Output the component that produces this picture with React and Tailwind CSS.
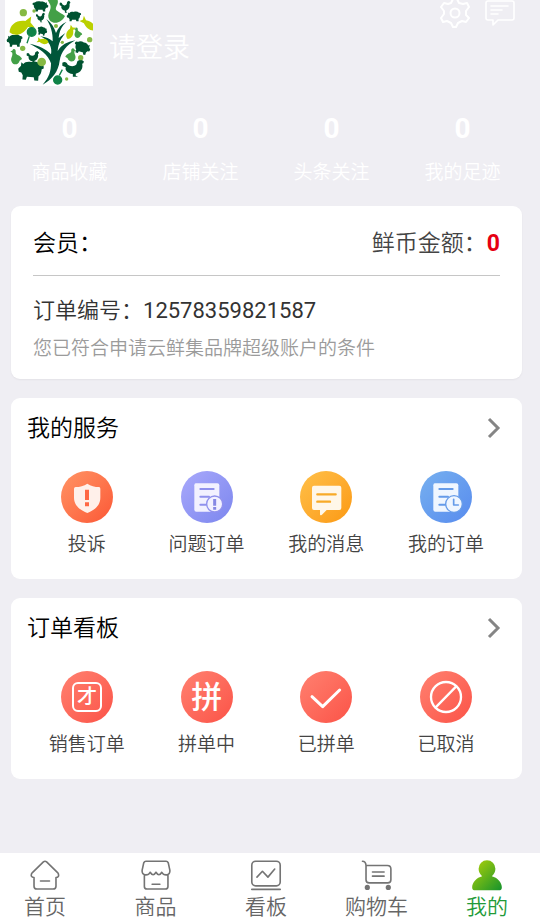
import React from 'react';

function TreeLogo() {
  return (
    <svg viewBox="15 0 264 258" className="h-[86px] w-[88px] shrink-0 bg-white" role="img" aria-label="云鲜集">
      <defs>
        <g id="pig">
          <path d="M0 12C-2 6 3 3 8 4C14 -1 22 -2 30 1C38 0 45 2 48 6L53 3L53 10L59 16L57 22L51 23L47 28V36H39L37 30H21L19 36H10L10 27C5 24 4 18 4 13Z" />
        </g>
        <g id="hen">
          <path d="M0 8C4 4 8 7 9 12C14 17 20 17 24 12L26 4L32 0L37 5L36 9L34 10C36 20 32 30 23 33L23 38L27 40L18 40L18 34C8 32 4 24 6 18L0 15Z" />
        </g>
        <g id="fish">
          <path d="M0 24C5 7 25 -2 48 5L66 -3L61 11L70 25L52 20C35 36 12 38 0 24Z" />
        </g>
        <g id="duck">
          <path d="M0 10L7 7C10 1 19 3 18 11C16 20 35 18 39 29L31 33C28 44 9 46 4 35C-1 25 10 21 6 12Z" />
        </g>
      </defs>
      <path fill="#00563a" d="M128 254C148 232 153 212 153 190C145 163 118 146 89 131C116 137 139 147 153 163C157 145 149 122 121 109C138 112 149 116 158 124C159 97 151 75 139 57C154 68 163 82 168 99C174 83 184 72 200 65C184 79 178 94 176 114L196 99C184 115 175 128 173 153C185 134 201 126 226 121C199 137 184 154 179 182C175 215 157 237 128 254Z" />
      <g fill="#005331">
        <use href="#pig" transform="translate(98 4) scale(.8 .85)" />
        <use href="#pig" transform="translate(243 35) scale(-.73 .8)" />
        <use href="#pig" transform="translate(67 104) scale(-.8 1)" />
        <use href="#pig" transform="translate(228 120) rotate(16) scale(.83 1)" />
        <use href="#pig" transform="translate(132 188) rotate(5) scale(-1.28 1.55)" />
        <use href="#pig" transform="translate(115 78) rotate(12) scale(.5 .7)" />
        <use href="#hen" transform="translate(179 2) scale(.87 .9)" />
        <use href="#hen" transform="translate(108 38) scale(.72)" />
        <use href="#hen" transform="translate(80 153) scale(1 .92)" />
        <use href="#hen" transform="translate(187 178) scale(1.75 1.3)" />
      </g>
      <g fill="#bbd000">
        <use href="#fish" transform="translate(23 67) rotate(-11) scale(1.1 1.25)" />
        <use href="#fish" transform="translate(273 101) rotate(230) scale(.78 .72)" />
        <use href="#fish" transform="translate(190 107) rotate(-53) scale(.6 .67)" />
        <use href="#fish" transform="translate(140 139) rotate(205) scale(.5 .55)" />
      </g>
      <g fill="#43a047">
        <path d="M143 0L173 0C177 14 163 22 169 31C177 38 188 42 195 48C184 70 160 75 148 59C138 41 156 31 151 15Z" />
        <use href="#duck" transform="translate(31 143) scale(.9 1.18)" />
        <use href="#duck" transform="translate(222 80) scale(.63 .8)" />
        <use href="#duck" transform="translate(229 141) scale(-.85 1.02)" />
      </g>
      <g fill="#86b943">
        <circle cx="70" cy="38" r="11" />
        <circle cx="125" cy="186" r="13" />
        <circle cx="68" cy="145" r="8" />
        <circle cx="269" cy="119" r="8" />
        <circle cx="102" cy="33" r="5" />
        <circle cx="168" cy="78" r="6" />
        <circle cx="242" cy="173" r="8" />
        <circle cx="187" cy="127" r="5" />
        <circle cx="200" cy="237" r="5" />
      </g>
      <g fill="#108348" stroke="#108348" strokeWidth="4">
        <circle cx="95" cy="96" r="13" />
        <circle cx="173" cy="240" r="12" />
        <path d="M88 109L81 130M178 226L187 209" />
      </g>
    </svg>
  );
}

function GearIcon() {
  return (
    <svg viewBox="0 0 30 28" className="h-7 w-[30px]" fill="none" stroke="white" strokeWidth="2" strokeLinejoin="round" aria-hidden="true">
      <path d="M11 3L13 -1H17L19 3L23 4L27 3L29 7L26 11V15L29 18L26 22L22 21L18 23L16 27H13L11 23L7 21L3 22L1 18L4 14V11L1 7L4 3L8 4Z" />
      <circle cx="15" cy="13" r="4.5" />
    </svg>
  );
}

function ChatIcon() {
  return (
    <svg viewBox="0 0 30 28" className="h-7 w-[30px]" fill="none" stroke="white" strokeWidth="1.6" strokeLinecap="round" strokeLinejoin="round" aria-hidden="true">
      <path d="M3 1H27Q29 1 29 3V18Q29 20 27 20H13L8 25V20H3Q1 20 1 18V3Q1 1 3 1ZM6 6H23M6 10H17M6 14H13" />
    </svg>
  );
}

function Disc({ tone, children }) {
  return (
    <span className={`flex size-[52px] items-center justify-center rounded-full ${tone}`}>
      {children}
    </span>
  );
}

function Glyph({ children }) {
  return (
    <svg viewBox="0 0 156 156" className="size-full" fill="none" strokeLinecap="round" strokeLinejoin="round" aria-hidden="true">
      {children}
    </svg>
  );
}

const RED = 'bg-linear-to-br from-[#ff8070] to-[#fb5247]';

const services = [
  {
    label: '投诉',
    icon: (
      <Disc tone="bg-linear-to-br from-[#ff9364] to-[#fb5635]">
        <Glyph>
          <path fill="#fff0ea" d="M79 38C89 45 102 48 114 48Q118 48 118 53V80C118 103 101 117 79 126C57 117 39 103 39 80V53Q39 48 44 48C56 48 69 45 79 38Z" />
          <path stroke="#ff6844" strokeWidth="12" strokeLinecap="butt" d="M78 56V87M78 94V106" />
        </Glyph>
      </Disc>
    ),
  },
  {
    label: '问题订单',
    icon: (
      <Disc tone="bg-linear-to-br from-[#a9a9fb] to-[#7c86ee]">
        <Glyph>
          <path fill="#f2f1ff" d="M44 37H109Q115 37 115 43V90L104 122H46Q40 122 40 116V43Q40 37 44 37Z" />
          <path stroke="#9091ed" strokeWidth="6" d="M58 54H98M58 77H84M58 101H76" />
          <circle cx="101" cy="99" r="24" fill="#f2f1ff" stroke="#9091ed" strokeWidth="4" />
          <path stroke="#8688e4" strokeWidth="9" strokeLinecap="butt" d="M101 84V104M101 108V116" />
        </Glyph>
      </Disc>
    ),
  },
  {
    label: '我的消息',
    icon: (
      <Disc tone="bg-linear-to-br from-[#ffc047] to-[#fb990c]">
        <Glyph>
          <path fill="#fff7e9" d="M42 44H118Q124 44 124 50V111Q124 117 118 117H80L66 131Q60 135 60 130V117H42Q36 117 36 111V50Q36 44 42 44Z" />
          <path stroke="#f8aa27" strokeWidth="7" d="M52 70H107M52 92H90" />
        </Glyph>
      </Disc>
    ),
  },
  {
    label: '我的订单',
    icon: (
      <Disc tone="bg-linear-to-br from-[#77b0ef] to-[#588bee]">
        <Glyph>
          <path fill="#eff6ff" d="M44 37H109Q115 37 115 43V90L104 122H46Q40 122 40 116V43Q40 37 44 37Z" />
          <path stroke="#659be9" strokeWidth="6" d="M58 54H98M58 77H84M58 101H76" />
          <circle cx="102" cy="99" r="25" fill="#eff6ff" stroke="#659be9" strokeWidth="4" />
          <path stroke="#659be9" strokeWidth="5" d="M101 85V102H115" />
        </Glyph>
      </Disc>
    ),
  },
];

const orders = [
  {
    label: '销售订单',
    icon: (
      <Disc tone={RED}>
        <span className="flex size-[30px] items-center justify-center rounded-md border-2 border-white text-[20px] leading-none font-medium text-white">才</span>
      </Disc>
    ),
  },
  {
    label: '拼单中',
    icon: (
      <Disc tone={RED}>
        <span className="text-[31px] leading-none font-medium text-white">拼</span>
      </Disc>
    ),
  },
  {
    label: '已拼单',
    icon: (
      <Disc tone={RED}>
        <Glyph>
          <path stroke="white" strokeWidth="9" d="M36 77L68 107L119 57" />
        </Glyph>
      </Disc>
    ),
  },
  {
    label: '已取消',
    icon: (
      <Disc tone={RED}>
        <Glyph>
          <circle cx="78" cy="78" r="45" stroke="white" strokeWidth="7" />
          <path stroke="white" strokeWidth="7" d="M47 109L108 47" />
        </Glyph>
      </Disc>
    ),
  },
];

function Board({ title, items }) {
  return (
    <section className="rounded-[9px] bg-white px-4 pb-5">
      <div className="flex h-[60px] items-center justify-between">
        <h2 className="pt-0.5 text-[23px] text-black">{title}</h2>
        <button type="button" aria-label={title} className="flex h-8 w-6 items-center justify-center">
          <svg viewBox="0 0 14 22" className="h-[22px] w-[14px]" fill="none" stroke="#858585" strokeWidth="3" aria-hidden="true">
            <path d="M2 2L11 11L2 20" />
          </svg>
        </button>
      </div>
      <div className="grid grid-cols-4 pt-[13px]">
        {items.map((item) => (
          <button key={item.label} type="button" className="flex flex-col items-center gap-2">
            {item.icon}
            <span className="text-[19px] leading-7 whitespace-nowrap text-[#444]">{item.label}</span>
          </button>
        ))}
      </div>
    </section>
  );
}

function NavIcon({ children }) {
  return (
    <svg viewBox="0 0 96 96" className="size-8" fill="none" stroke="#747474" strokeWidth="5" strokeLinecap="round" strokeLinejoin="round" aria-hidden="true">
      {children}
    </svg>
  );
}

const tabs = [
  {
    label: '首页',
    icon: (
      <NavIcon>
        <path d="M43 6Q48 2 53 6L87 39Q92 46 89 51Q87 54 82 54V81Q82 90 73 90H23Q14 90 14 81V54Q8 54 6 50Q4 45 9 39ZM34 65H62" />
      </NavIcon>
    ),
  },
  {
    label: '商品',
    icon: (
      <NavIcon>
        <path d="M17 4H79Q84 4 86 9L91 32Q92 44 81 46Q71 47 66 38Q57 53 48 38Q39 53 30 38Q25 47 15 46Q4 44 5 32L10 9Q12 4 17 4ZM12 47V82Q12 90 20 90H77Q85 90 85 82V47M36 75H60" />
      </NavIcon>
    ),
  },
  {
    label: '看板',
    icon: (
      <NavIcon>
        <rect x="4" y="4" width="88" height="76" rx="12" />
        <path d="M20 53L37 35L54 53L75 28M4 91H92" />
      </NavIcon>
    ),
  },
  {
    label: '购物车',
    icon: (
      <NavIcon>
        <path d="M3 4Q13 4 14 17H80Q91 17 91 28V61Q91 71 81 71H24Q14 71 14 61V17M34 37H70M34 50H70" />
        <circle cx="18" cy="85" r="8" fill="#747474" stroke="none" />
        <circle cx="83" cy="85" r="8" fill="#747474" stroke="none" />
      </NavIcon>
    ),
  },
  {
    label: '我的',
    active: true,
    icon: (
      <svg viewBox="0 0 96 96" className="size-8" aria-hidden="true">
        <defs>
          <linearGradient id="person" x1="0" y1="0" x2="1" y2="1">
            <stop offset="0.15" stopColor="#9bc90d" />
            <stop offset="1" stopColor="#15932c" />
          </linearGradient>
        </defs>
        <path fill="url(#person)" d="M33 50Q22 40 22 27A26 26 0 0 1 74 27Q74 40 63 50C80 54 94 69 94 84Q94 94 84 94H12Q2 94 2 84C2 69 16 54 33 50Z" />
      </svg>
    ),
  },
];

const stats = ['商品收藏', '店铺关注', '头条关注', '我的足迹'];

export default function App() {
  return (
    <div className="flex min-h-screen flex-col bg-[#efeef3] font-[Roboto,'Noto_Sans_CJK_SC',sans-serif] font-[350]">
      <header className="h-[206px] text-white">
        <div className="flex items-start pr-[25px] pl-[5px]">
          <TreeLogo />
          <a href="#login" className="mt-7 ml-4 text-[27px] leading-10">请登录</a>
          <div className="ml-auto flex gap-[15px]">
            <button type="button" aria-label="设置"><GearIcon /></button>
            <button type="button" aria-label="消息"><ChatIcon /></button>
          </div>
        </div>
        <div className="mt-[25px] mr-3 ml-1 grid grid-cols-4">
          {stats.map((label) => (
            <a key={label} href="#stats" className="flex flex-col items-center">
              <strong className="text-[28px] leading-9 font-bold">0</strong>
              <span className="mt-3 text-[19px] leading-7">{label}</span>
            </a>
          ))}
        </div>
      </header>

      <main className="mr-[18px] ml-[11px] flex flex-1 flex-col gap-[19px]">
        <section className="rounded-[9px] bg-white px-[22px] pb-4 shadow-xs">
          <div className="flex h-[70px] items-center justify-between border-b border-[#c6c6c6] pt-2">
            <h2 className="text-[23px] text-black">会员：</h2>
            <p className="text-[23px] text-[#444]">
              鲜币金额：<span className="font-bold text-[#e60012]">0</span>
            </p>
          </div>
          <p className="pt-[19px] text-[22px] leading-8 text-[#333]">订单编号：<span className="font-normal">12578359821587</span></p>
          <p className="pt-2 text-[19px] leading-7 text-[#9b9b9b]">您已符合申请云鲜集品牌超级账户的条件</p>
        </section>
        <Board title="我的服务" items={services} />
        <Board title="订单看板" items={orders} />
      </main>

      <nav className="flex h-[70px] justify-between bg-white pt-[7px] pr-[21px] pl-[13px]">
        {tabs.map((tab) => (
          <a key={tab.label} href="#tab" className="flex w-16 flex-col items-center">
            {tab.icon}
            <span className={`text-[21px] leading-8 whitespace-nowrap ${tab.active ? 'text-[#229a38]' : 'text-[#666]'}`}>{tab.label}</span>
          </a>
        ))}
      </nav>
    </div>
  );
}
